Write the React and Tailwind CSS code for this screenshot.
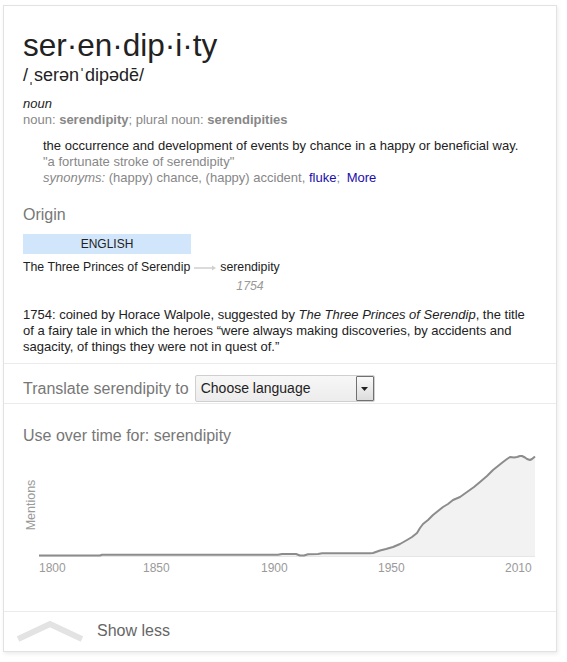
import React from 'react';

const pts = [
  [39, 555.5], [100, 555.5], [102, 554.8], [278, 554.8], [282, 554], [296, 554], [300, 555.5],
  [304, 555.5], [308, 554.2], [318, 554], [322, 553.3], [370, 553.3], [373, 553], [380, 550.5],
  [386, 549], [393, 547], [400, 544], [407, 540], [412, 537], [417, 533], [420, 528], [423, 524],
  [428, 520], [433, 515], [438, 511], [443, 507], [448, 504], [453, 500], [460, 497], [467, 492],
  [474, 487], [480, 482], [487, 476], [493, 470], [498, 466], [503, 462], [507, 459], [510, 457],
  [514, 457.5], [517, 457], [520, 456], [522, 456], [525, 457.5], [527, 459], [530, 460],
  [532, 459], [535, 456.5],
];

const line = pts.map(([x, y], i) => `${i ? 'L' : 'M'}${x} ${y}`).join(' ');
const area = `${line} L535 556 L39 556 Z`;

const UsageChart = () => (
  <svg width="530" height="134" viewBox="24 446 530 134" className="block">
    <line x1="39" y1="556.5" x2="535" y2="556.5" stroke="#e6e6e6" strokeWidth="1" />
    <path d={area} fill="#f2f2f2" />
    <path d={line} fill="none" stroke="#8c8c8c" strokeWidth="2" strokeLinejoin="round" />
    <text
      x="0"
      y="0"
      transform="translate(35 505) rotate(-90)"
      textAnchor="middle"
      fontSize="12.5"
      fill="#9a9a9a"
    >
      Mentions
    </text>
    <g fontSize="12" fill="#9a9a9a">
      <text x="39" y="572">1800</text>
      <text x="143" y="572">1850</text>
      <text x="261" y="572">1900</text>
      <text x="378" y="572">1950</text>
      <text x="505" y="572">2010</text>
    </g>
  </svg>
);

export default function App() {
  return (
    <div className="min-h-[662px] bg-white pl-[3px] pt-[5px] font-['Liberation_Sans',Arial,sans-serif]">
      <div className="w-[554px] h-[647px] border border-[#e2e2e2] bg-white shadow-[1px_2px_4px_rgba(0,0,0,0.08)]">
        <div className="pl-[19px] pr-[19px] pt-[22px] pb-[8px]">
          <div className="text-[31.5px] leading-[34px] text-[#222]">ser·en·dip·i·ty</div>
          <div className="mt-[2px] text-[18px] leading-[22px] text-[#222]">/ˌserənˈdipədē/</div>

          <div className="mt-[10px] text-[13px] leading-[16px]">
            <div className="italic text-[#222]">noun</div>
            <div className="text-[#878787]">
              noun: <span className="font-bold">serendipity</span>; plural noun:{' '}
              <span className="font-bold">serendipities</span>
            </div>
          </div>

          <div className="mt-[10px] pl-[20px] text-[13px] leading-[16px]">
            <div className="text-[#222]">the occurrence and development of events by chance in a happy or beneficial way.</div>
            <div className="text-[#878787]">"a fortunate stroke of serendipity"</div>
            <div className="text-[#878787]">
              <span className="italic">synonyms:</span> (happy) chance, (happy) accident,{' '}
              <span className="text-[#1a0dab]">fluke</span>;{' '}
              <span className="ml-[3px] text-[#1a0dab]">More</span>
            </div>
          </div>

          <div className="mt-[19px] text-[16px] leading-[20px] text-[#777]">Origin</div>
          <div className="mt-[9px] flex h-[20px] w-[168px] items-center justify-center bg-[#d2e6fb] text-[12px] text-[#222]">
            ENGLISH
          </div>
          <div className="mt-[5px] flex items-start text-[12.3px] leading-[16px] text-[#222]">
            <span>The Three Princes of Serendip</span>
            <svg width="30" height="16" viewBox="0 0 30 16" className="shrink-0">
              <line x1="4" y1="9" x2="23" y2="9" stroke="#cfcfcf" strokeWidth="1.5" />
              <path d="M22 6.5 L26 9 L22 11.5 Z" fill="#cfcfcf" />
            </svg>
            <div className="flex flex-col items-center">
              <span>serendipity</span>
              <span className="mt-[3px] italic text-[#999]">1754</span>
            </div>
          </div>

          <p className="mt-[13px] text-[13px] leading-[16px] text-[#222]">
            1754: coined by Horace Walpole, suggested by <i>The Three Princes of Serendip</i>, the title of a fairy
            tale in which the heroes “were always making discoveries, by accidents and sagacity, of things they were
            not in quest of.”
          </p>
        </div>

        <div className="border-t border-[#ebebeb] flex items-center gap-[6px] pl-[19px] pt-[11px] pb-[1px]">
          <span className="text-[16px] leading-[20px] text-[#777]">Translate serendipity to</span>
          <div className="flex h-[27px] w-[180px] items-stretch rounded-[2px] border border-[#cfcfcf] bg-[linear-gradient(#f7f7f7,#ececec)]">
            <span className="flex-1 pl-[5px] text-[14px] leading-[25px] text-[#222]">Choose language</span>
            <div className="flex w-[18px] items-center justify-center rounded-[1px] border border-[#707070] bg-[linear-gradient(#fafafa,#dcdcdc)]">
              <svg width="7" height="4" viewBox="0 0 7 4">
                <path d="M0 0 H7 L3.5 4 Z" fill="#222" />
              </svg>
            </div>
          </div>
        </div>

        <div className="border-t border-[#ebebeb] pt-[22px] pb-[31px]">
          <div className="pl-[19px] text-[16px] leading-[20px] text-[#777]">Use over time for: serendipity</div>
          <div className="pl-[20px]">
            <UsageChart />
          </div>
        </div>

        <div className="flex h-[39px] items-center gap-[14px] border-t border-[#ebebeb] pl-[13px]">
          <svg width="66" height="22" viewBox="0 0 66 22" className="shrink-0">
            <polyline points="1,19 33,4 65,19" fill="none" stroke="#e3e3e3" strokeWidth="6" />
          </svg>
          <span className="text-[16px] leading-[20px] text-[#666]">Show less</span>
        </div>
      </div>
    </div>
  );
}
